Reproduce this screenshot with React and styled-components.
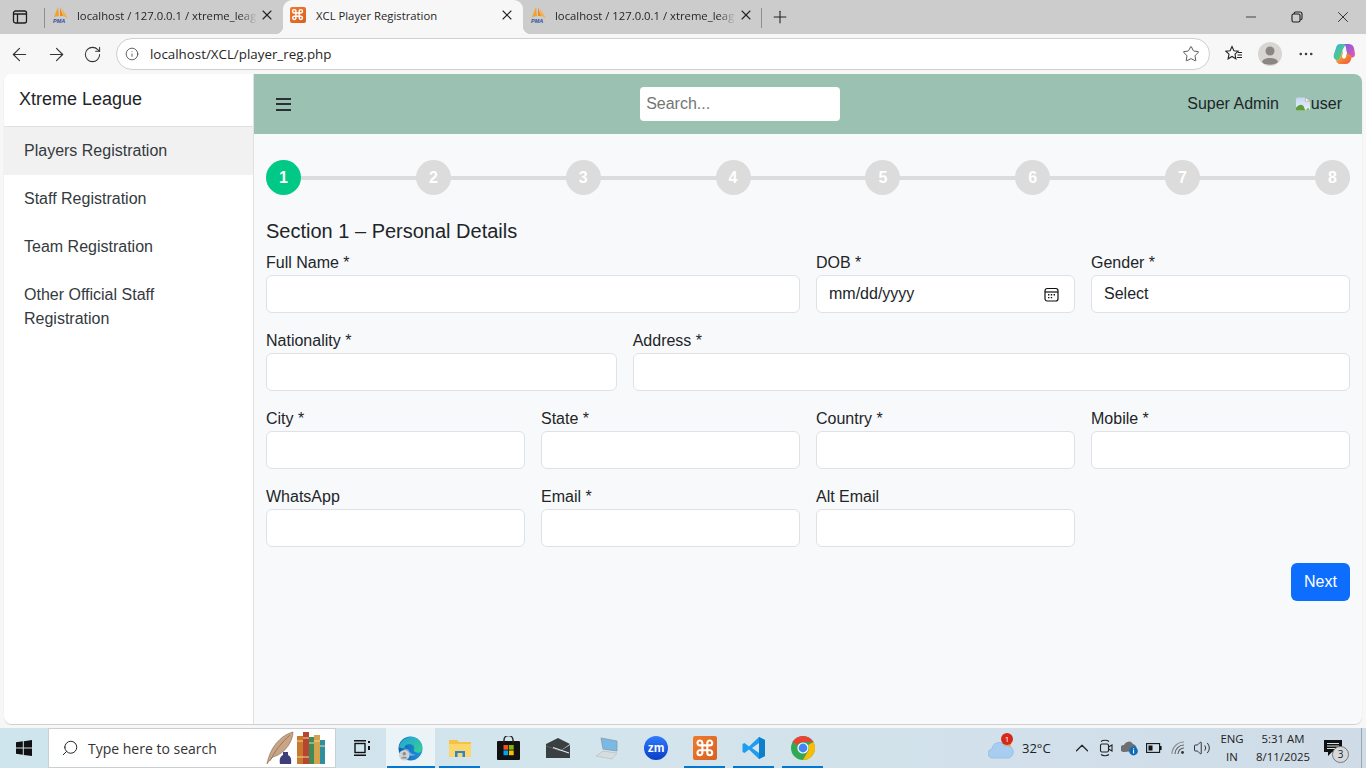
import React from "react";
import styled, { createGlobalStyle } from "styled-components";
import {
  ArrowLeft,
  ArrowRight,
  RotateCw,
  Info,
  Star,
  MoreHorizontal,
  X,
  Plus,
  Minus,
  Search,
  ChevronUp,
  Volume2,
  Command,
} from "lucide-react";

const GlobalStyle = createGlobalStyle`
  * { box-sizing: border-box; }
  html, body { margin: 0; padding: 0; height: 100%; overflow: hidden; }
  body { font-family: "Liberation Sans", Arial, sans-serif; background: #f7f7f7; color: #212529; }
`;

const Screen = styled.div`
  width: 1366px;
  height: 768px;
  display: flex;
  flex-direction: column;
  overflow: hidden;
`;

/* browser chrome */
const TabStrip = styled.div`
  height: 34px;
  background: #cccccc;
  display: flex;
  align-items: flex-end;
`;
const SideToggle = styled.div`
  width: 44px;
  height: 34px;
  display: flex;
  align-items: center;
  padding-left: 12px;
`;
const Sep = styled.div`
  width: 1px;
  height: 20px;
  background: #8f8f8f;
  margin: 0 0 6px 0;
`;
const Tab = styled.div`
  position: relative;
  width: ${(p) => p.$w}px;
  height: 34px;
  display: flex;
  align-items: center;
  padding: 0 ${(p) => p.$pr}px 4px 7px;
  background: ${(p) => (p.$active ? "#f7f7f7" : "transparent")};
  border-radius: 9px 9px 0 0;
  font-family: "Open Sans", sans-serif;
  font-size: 11.3px;
  color: #262626;
  ${(p) =>
    p.$active &&
    `
    &::before, &::after {
      content: "";
      position: absolute;
      bottom: 0;
      width: 8px;
      height: 8px;
    }
    &::before { left: -8px; background: radial-gradient(circle at 0 0, transparent 8px, #f7f7f7 8.5px); }
    &::after { right: -8px; background: radial-gradient(circle at 100% 0, transparent 8px, #f7f7f7 8.5px); }
  `}
`;
const TabTitle = styled.span`
  flex: 1;
  min-width: 0;
  margin: 0 2px 0 ${(p) => (p.$active ? 10 : 9)}px;
  white-space: nowrap;
  ${(p) =>
    !p.$active &&
    `
    -webkit-mask-image: linear-gradient(90deg, #000 90%, transparent 100%);
    mask-image: linear-gradient(90deg, #000 90%, transparent 100%);
  `}
`;
const NewTab = styled.div`
  width: 36px;
  display: flex;
  justify-content: center;
  height: 34px;
  align-items: center;
`;
const Grow = styled.div`
  flex: 1;
`;
const WinBtn = styled.div`
  width: 46px;
  height: 34px;
  display: flex;
  align-items: center;
  justify-content: center;
`;
const ToolBar = styled.div`
  height: 40px;
  background: #f7f7f7;
  display: flex;
  align-items: center;
`;
const NavBtn = styled.div`
  width: 36px;
  height: 32px;
  display: flex;
  align-items: center;
  justify-content: center;
  color: #333;
  margin-left: ${(p) => p.$ml || 0}px;
`;
const Omni = styled.div`
  width: 1094px;
  height: 32px;
  margin-left: 6px;
  background: #fff;
  border: 1px solid #cfcfcf;
  border-radius: 16px;
  display: flex;
  align-items: center;
  padding: 0 9px 0 8px;
  font-family: "Open Sans", sans-serif;
  font-size: 13.35px;
  color: #262626;
`;
const OmniText = styled.span`
  flex: 1;
  margin-left: 11px;
`;
const Avatar = styled.div`
  width: 24px;
  height: 24px;
  border-radius: 50%;
  background: #d8d6d3;
  display: flex;
  align-items: center;
  justify-content: center;
`;

/* page */
const Page = styled.div`
  height: 651px;
  padding: 0 4px 1px;
  background: #f7f7f7;
`;
const Frame = styled.div`
  height: 100%;
  display: flex;
  border-radius: 8px;
  overflow: hidden;
  background: #fff;
  box-shadow: 0 1px 1px rgba(0, 0, 0, 0.18);
`;
const Sidebar = styled.aside`
  width: 250px;
  flex: none;
  background: #fff;
  border-right: 1px solid #dee2e6;
`;
const Brand = styled.div`
  height: 53px;
  padding: 0 15px 1px;
  display: flex;
  align-items: center;
  font-size: 18px;
  color: #212529;
  border-bottom: 1px solid #dee2e6;
`;
const NavItem = styled.div`
  padding: 12px 20px;
  font-size: 16px;
  line-height: 24px;
  color: #343a40;
  background: ${(p) => (p.$active ? "#f1f1f1" : "transparent")};
`;
const Main = styled.main`
  flex: 1;
  min-width: 0;
  background: #f8f9fa;
  display: flex;
  flex-direction: column;
`;
const TopBar = styled.header`
  height: 60px;
  background: #9ac1b1;
  display: flex;
  align-items: center;
  justify-content: space-between;
  padding: 0 20px;
`;
const Burger = styled.div`
  width: 20px;
  height: 13px;
  padding: 0 0 0 2px;
  display: flex;
  flex-direction: column;
  justify-content: space-between;
`;
const BurgerBar = styled.span`
  display: block;
  width: 15px;
  height: 2px;
  background: #2b3034;
`;
const SearchBox = styled.div`
  width: 200px;
  height: 34px;
  background: #fff;
  border-radius: 4px;
  padding: 0 6px;
  display: flex;
  align-items: center;
  font-size: 16px;
  color: #757575;
  margin-right: 1px;
`;
const UserBox = styled.div`
  display: flex;
  align-items: center;
  font-size: 16px;
  color: #212529;
`;
const Broken = styled.div`
  display: flex;
  align-items: center;
  margin-left: 16px;
`;
const Content = styled.div`
  padding: 26px 12px 0;
`;
const Stepper = styled.div`
  display: flex;
  align-items: center;
  justify-content: space-between;
  position: relative;
  margin-bottom: 24px;
`;
const StepLine = styled.div`
  position: absolute;
  left: 0;
  right: 0;
  top: 16px;
  height: 4px;
  background: #dcdcdc;
`;
const Step = styled.div`
  position: relative;
  width: 35px;
  height: 35px;
  border-radius: 50%;
  background: ${(p) => (p.$active ? "#00c985" : "#dcdcdc")};
  color: #fff;
  font-weight: 700;
  font-size: 16px;
  display: flex;
  align-items: center;
  justify-content: center;
`;
const Title = styled.h5`
  margin: 0 0 8px;
  font-size: 20px;
  font-weight: 400;
  line-height: 24px;
  color: #212529;
`;
const FormGrid = styled.div`
  display: grid;
  grid-template-columns: repeat(12, 1fr);
  column-gap: 16px;
  row-gap: 16px;
`;
const Field = styled.div`
  grid-column: span ${(p) => p.$span};
`;
const Label = styled.label`
  display: block;
  font-size: 16px;
  line-height: 24px;
  color: #212529;
`;
const Control = styled.div`
  height: 38px;
  background: #fff;
  border: 1px solid #dee2e6;
  border-radius: 6px;
  padding: 0 15px 0 12px;
  display: flex;
  align-items: center;
  justify-content: space-between;
  font-size: 16px;
  color: #212529;
`;
const Actions = styled.div`
  display: flex;
  justify-content: flex-end;
  margin-top: 16px;
`;
const NextBtn = styled.button`
  height: 38px;
  width: 59px;
  background: #0d6efd;
  border: 0;
  border-radius: 6px;
  color: #fff;
  font-family: inherit;
  font-size: 16px;
`;

/* taskbar */
const Gap = styled.div`
  height: 3px;
  background: #f7f7f7;
`;
const Taskbar = styled.div`
  height: 40px;
  background: linear-gradient(90deg, #cfe5ee 0%, #d3e4ec 50%, #cfdce8 100%);
  display: flex;
  align-items: center;
`;
const StartBtn = styled.div`
  width: 48px;
  display: flex;
  justify-content: center;
`;
const SearchBar = styled.div`
  width: 288px;
  height: 40px;
  background: #fff;
  border: 1px solid #c9d0d4;
  display: flex;
  align-items: center;
  padding: 0 9px 0 12px;
  font-size: 14px;
  color: #333;
  margin-right: 1px;
`;
const SearchLabel = styled.span`
  margin-left: 9px;
  flex: 1;
  font-family: "Open Sans", sans-serif;
  font-size: 14px;
`;
const Slot = styled.div`
  position: relative;
  width: 49px;
  height: 40px;
  display: flex;
  align-items: center;
  justify-content: center;
  background: ${(p) => (p.$sel ? "rgba(255,255,255,.55)" : "transparent")};
  ${(p) =>
    p.$on &&
    `
    &::after {
      content: "";
      position: absolute;
      bottom: 0;
      left: ${p.$sel ? 1 : 4}px;
      right: ${p.$sel ? 0 : 4}px;
      height: 2px;
      background: #0078d4;
    }
  `}
`;
const Tray = styled.div`
  margin-left: auto;
  display: flex;
  align-items: center;
  height: 40px;
  padding-right: 8px;
  font-size: 13px;
  color: #222;
  font-family: "Open Sans", sans-serif;
`;
const Temp = styled.span`
  width: 28px;
  margin: 0 20px 0 8px;
  font-size: 13px;
  white-space: nowrap;
`;
const TrayIcon = styled.div`
  width: 24px;
  display: flex;
  justify-content: center;
`;
const Locale = styled.div`
  width: 34px;
  margin-left: 1px;
  text-align: center;
  font-size: 11.4px;
  line-height: 18px;
`;
const Clock = styled.div`
  width: 68px;
  text-align: center;
  font-size: 11.4px;
  line-height: 18px;
`;
const Weather = styled.div`
  position: relative;
  width: 26px;
  height: 24px;
  padding-top: 3px;
`;
const Badge = styled.span`
  position: absolute;
  top: -3px;
  left: 13px;
  width: 12px;
  height: 12px;
  border-radius: 50%;
  background: #d8281e;
  color: #fff;
  font-size: 8px;
  line-height: 12px;
  text-align: center;
`;
const Notify = styled.div`
  position: relative;
  width: 36px;
  height: 40px;
  padding-left: 7px;
  display: flex;
  align-items: center;
`;
const NotifyCount = styled.span`
  position: absolute;
  left: 15px;
  top: 18px;
  width: 17px;
  height: 17px;
  border-radius: 50%;
  background: #d5d9dc;
  border: 1px solid #777;
  font-size: 10px;
  line-height: 15px;
  text-align: center;
`;
const DesktopEdge = styled.div`
  width: 1px;
  height: 40px;
  background: #9aa5ad;
  margin-right: 4px;
`;
const XamppBox = styled.div`
  width: ${(p) => p.$size}px;
  height: ${(p) => p.$size}px;
  background: linear-gradient(135deg, #ee7b2e, #d9601f);
  border-radius: 2px;
  display: flex;
  align-items: center;
  justify-content: center;
  flex: none;
`;

const PmaIcon = () => (
  <svg width="16" height="16" viewBox="0 0 16 16" style={{ flex: "none" }}>
    <path d="M6 0 L2 10 L7 9 Z" fill="#f4a12a" />
    <path d="M8 0 L8 9 L11 9 Z" fill="#f08a1d" />
    <path d="M10 2 L16 11 L11 9 Z" fill="#f5b04a" />
    <text x="1" y="15.5" fontSize="5.5" fontWeight="700" fontStyle="italic" fill="#2f4f9f" fontFamily="Liberation Sans">PMA</text>
  </svg>
);

const XamppIcon = ({ size = 16 }) => (
  <XamppBox $size={size}>
    <Command size={size * 0.82} color="#fff" strokeWidth={2.6} />
  </XamppBox>
);

const SidePanelIcon = () => (
  <svg width="16" height="16" viewBox="0 0 16 16" fill="none" stroke="#1c1c1c" strokeWidth="1.3">
    <rect x="1.5" y="2" width="13" height="12" rx="2" />
    <path d="M1.5 5 H14.5 M5.5 5 V14" />
  </svg>
);

const RestoreIcon = () => (
  <svg width="12" height="12" viewBox="0 0 12 12" fill="none" stroke="#1c1c1c" strokeWidth="1.1">
    <rect x="1" y="3" width="8" height="8" rx="1.5" />
    <path d="M3.2 3 V2.5 A1.5 1.5 0 0 1 4.7 1 H9 A2 2 0 0 1 11 3 V7.3 A1.5 1.5 0 0 1 9.5 8.8" />
  </svg>
);

const FavsIcon = () => (
  <svg width="18" height="18" viewBox="0 0 18 18" fill="none" stroke="#222" strokeWidth="1.1">
    <path d="M7 1.5 L8.9 5.7 L13.2 6.2 L10 9.2 L10.9 13.8 L7 11.5 L3.1 13.8 L4 9.2 L0.8 6.2 L5.1 5.7 Z" />
    <path d="M13 7.5 H17 M12.5 10 H17 M12 12.5 H17" />
  </svg>
);

const CopilotIcon = () => (
  <svg width="22" height="22" viewBox="0 0 22 22">
    <defs>
      <linearGradient id="cpA" x1="0" y1="0" x2="1" y2="1">
        <stop offset="0" stopColor="#2fb5e8" />
        <stop offset="1" stopColor="#6ed04a" />
      </linearGradient>
      <linearGradient id="cpB" x1="0" y1="0" x2="1" y2="1">
        <stop offset="0" stopColor="#7d5cf0" />
        <stop offset="1" stopColor="#e85aa8" />
      </linearGradient>
      <linearGradient id="cpC" x1="0" y1="0" x2="1" y2="1">
        <stop offset="0" stopColor="#f5c030" />
        <stop offset="1" stopColor="#f0503c" />
      </linearGradient>
    </defs>
    <path d="M7 1 H13 L10 6 L8 13 C7 17 5 18 3 17 C1 16 0 14 1 11 L3 5 C3.5 2.5 5 1 7 1 Z" fill="url(#cpA)" />
    <path d="M11 1 H16 C18 1 20 2 21 5 L22 11 C22 14 20 15 18 14 L14 11 L13 5 C12.7 3 12 1.5 11 1 Z" fill="url(#cpB)" />
    <path d="M9 9 L11 9 L19 13 C18 18 16 21 13 21 H7 C5 21 3 19 3 17 C6 18 7 16 8 13 Z" fill="url(#cpC)" />
    <path d="M10 9 H14 L13 14 C12 16 10 16 9 14 Z" fill="#fff" />
  </svg>
);

const BrokenImg = () => (
  <svg width="16" height="16" viewBox="0 0 17 16">
    <defs>
      <linearGradient id="skyA" x1="0" y1="0" x2="0" y2="1">
        <stop offset="0" stopColor="#c6d8f2" />
        <stop offset="1" stopColor="#e8f0fa" />
      </linearGradient>
    </defs>
    <path d="M1 3 Q1 1 3 1 H11 L16 5 V15 H1 Z" fill="url(#skyA)" />
    <path d="M1 15 V12 C4 8 7 8 9 10 L11 15 Z" fill="#5f9e3a" />
    <path d="M11 15 L14 12 L16 15 Z" fill="#7fb45a" />
    <path d="M11 1 V5 H16 Z" fill="#fff" stroke="#a8a8a8" strokeWidth=".8" />
  </svg>
);

const CalendarIcon = () => (
  <svg width="15" height="15" viewBox="0 0 15 15" fill="none" stroke="#111" strokeWidth="1.2">
    <rect x="1" y="1.5" width="13" height="12.5" rx="2.2" />
    <path d="M1 5 H14" />
    <path d="M4 7.7 H5.4 M6.8 7.7 H8.2 M9.6 7.7 H11 M4 10.6 H5.4 M6.8 10.6 H8.2" strokeWidth="1.4" />
  </svg>
);

const WinLogo = () => (
  <svg width="16" height="16" viewBox="0 0 16 16" fill="#111">
    <path d="M0 2.3 L6.8 1.3 V7.6 H0 Z M7.8 1.2 L16 0 V7.6 H7.8 Z M0 8.5 H6.8 V14.8 L0 13.8 Z M7.8 8.5 H16 V16 L7.8 14.9 Z" />
  </svg>
);

const Quill = () => (
  <svg width="60" height="34" viewBox="0 0 60 34">
    <path d="M1 33 C3 22 10 6 27 1 C27 10 19 23 7 26 L3 30 Z" fill="#c8a587" stroke="#8c6a50" strokeWidth=".6" />
    <path d="M4 30 C9 20 15 12 24 4" fill="none" stroke="#7d5a40" strokeWidth=".6" />
    <path d="M14 33 C13 27 15 25 17 24 V21 H22 V24 C24 25 26 27 25 33 Z" fill="#3e3f78" />
    <rect x="31" y="5" width="6" height="28" fill="#c9792e" />
    <rect x="37" y="1" width="6" height="32" fill="#b8452f" />
    <rect x="43" y="6" width="5" height="27" fill="#3f8a5a" />
    <rect x="48" y="4" width="6" height="29" fill="#d6a24a" />
    <rect x="54" y="9" width="5" height="24" fill="#2e8fa0" />
    <path d="M31 10 H37 M31 26 H37 M37 7 H43 M37 26 H43 M43 12 H48 M48 10 H54 M54 15 H59" stroke="#f0d9a0" strokeWidth="1" />
  </svg>
);

const TaskView = () => (
  <svg width="18" height="18" viewBox="0 0 18 18" fill="none" stroke="#111" strokeWidth="1.4">
    <rect x="2" y="4.5" width="10" height="9" />
    <path d="M1 1.7 H13 M1 16.3 H13" />
    <rect x="15" y="2" width="2" height="2" fill="#111" strokeWidth="0" />
    <rect x="15" y="7" width="2" height="4" fill="#111" strokeWidth="0" />
  </svg>
);

const EdgeIcon = () => (
  <svg width="25" height="25" viewBox="0 0 24 24">
    <defs>
      <linearGradient id="edgeA" x1="0" y1="0" x2="1" y2="1">
        <stop offset="0" stopColor="#1fa3e0" />
        <stop offset="1" stopColor="#36d38a" />
      </linearGradient>
      <linearGradient id="edgeB" x1="0" y1="0" x2="1" y2="0">
        <stop offset="0" stopColor="#0f5fb0" />
        <stop offset="1" stopColor="#2095e0" />
      </linearGradient>
    </defs>
    <circle cx="12" cy="12" r="11.5" fill="url(#edgeB)" />
    <path d="M1 11 C2 3 12 -2 19 3 C24 7 24 13 22 15 C20 17 16 16 15 14 C17 10 14 7 10 8 C7 8.5 6 10 6 12 Z" fill="url(#edgeA)" />
    <path d="M6 12 C6 17 11 21 17 18 C14 18 11 16 10 13 Z" fill="#e4f2f8" opacity=".45" />
    <circle cx="6" cy="18.5" r="5" fill="#cfd2d4" />
    <circle cx="6" cy="17" r="1.7" fill="#8d8d8d" />
    <path d="M3 21.5 C3.5 19.3 8.5 19.3 9 21.5 Z" fill="#8d8d8d" />
  </svg>
);

const FolderIcon = () => (
  <svg width="24" height="22" viewBox="0 0 24 22">
    <path d="M1 3 H9 L11 5 H23 V20 H1 Z" fill="#f5c242" />
    <rect x="1" y="7" width="22" height="13" fill="#fbd76b" />
    <path d="M7 14 H17 V20 H14.5 V16 H9.5 V20 H7 Z" fill="#2b86d0" />
  </svg>
);

const StoreIcon = () => (
  <svg width="23" height="24" viewBox="0 0 23 24">
    <rect x="0" y="5" width="23" height="19" rx="1" fill="#111" />
    <path d="M7 7 V4 A4.5 4.5 0 0 1 16 4 V7" fill="none" stroke="#222" strokeWidth="1.4" />
    <rect x="6.5" y="9" width="4.7" height="4.7" fill="#f25022" />
    <rect x="12" y="9" width="4.7" height="4.7" fill="#7fba00" />
    <rect x="6.5" y="14.5" width="4.7" height="4.7" fill="#00a4ef" />
    <rect x="12" y="14.5" width="4.7" height="4.7" fill="#ffb900" />
  </svg>
);

const MailIcon = () => (
  <svg width="24" height="20" viewBox="0 0 24 20">
    <path d="M0 6 L12 0 L24 6 L14 13 L0 8 Z" fill="#3a3f42" />
    <path d="M0 8 L14 13 L24 7 V20 H0 Z" fill="#3a3f42" />
    <path d="M7 9.5 L23 15" stroke="#e2edf2" strokeWidth="1.2" />
  </svg>
);

const LaptopIcon = () => (
  <svg width="24" height="24" viewBox="0 0 24 24">
    <path d="M6 2 L22 5 V15 L8 13 Z" fill="#79b9e6" stroke="#8a9aa5" strokeWidth=".8" />
    <path d="M1 20 L8 15 L22 17 L17 23 Z" fill="#d7dcdf" stroke="#aab2b7" strokeWidth=".5" />
  </svg>
);

const ZoomIcon = () => (
  <svg width="24" height="24" viewBox="0 0 24 24">
    <defs>
      <linearGradient id="zmA" x1="0" y1="0" x2="0" y2="1">
        <stop offset="0" stopColor="#2f7bff" />
        <stop offset="1" stopColor="#0a3fc4" />
      </linearGradient>
    </defs>
    <circle cx="12" cy="12" r="12" fill="url(#zmA)" />
    <text x="12" y="16" textAnchor="middle" fontSize="12" fontWeight="700" fill="#fff" fontFamily="Liberation Sans">zm</text>
  </svg>
);

const VsCodeIcon = () => (
  <svg width="24" height="24" viewBox="0 0 24 24">
    <path d="M17 1 L23 4 V20 L17 23 L7 13.5 L2.5 17 L0.5 16 V8 L2.5 7 L7 10.5 Z" fill="#1f9cf0" />
    <path d="M17 1 L23 4 V20 L17 23 Z" fill="#0d7fcb" />
    <path d="M17 7 L17 17 L10 12 Z" fill="#d3e4ec" />
  </svg>
);

const ChromeIcon = () => (
  <svg width="24" height="24" viewBox="0 0 24 24">
    <circle cx="12" cy="12" r="12" fill="#34a853" />
    <path d="M12 0 A12 12 0 0 1 22.4 6 H12 A6 6 0 0 0 6.8 9 L1.6 6 A12 12 0 0 1 12 0 Z" fill="#ea4335" />
    <path d="M22.4 6 A12 12 0 0 1 12 24 L17.2 15 A6 6 0 0 0 17.2 9 Z" fill="#fbbc05" />
    <circle cx="12" cy="12" r="5.6" fill="#fff" />
    <circle cx="12" cy="12" r="4.4" fill="#4285f4" />
  </svg>
);

const CloudIcon = () => (
  <svg width="26" height="20" viewBox="0 0 26 20">
    <circle cx="18" cy="6" r="5" fill="#f5a623" />
    <path d="M5 19 A4.5 4.5 0 0 1 4 10 A7 7 0 0 1 17 7 A6 6 0 0 1 21 19 Z" fill="#a9cdf0" stroke="#86b2de" strokeWidth=".6" />
  </svg>
);

const CameraIcon = () => (
  <svg width="14" height="18" viewBox="0 0 14 18" fill="none" stroke="#222" strokeWidth="1.1">
    <rect x="1.5" y="5" width="8" height="8" rx="1.5" />
    <path d="M9.5 8 L13 6 V12 L9.5 10 M2 2.5 C4 .8 8 .8 10 2.5 M2 15.5 C4 17.2 8 17.2 10 15.5" />
  </svg>
);

const CloudInfo = () => (
  <svg width="18" height="16" viewBox="0 0 18 16">
    <path d="M3 12 A3 3 0 0 1 3 5 A5 5 0 0 1 12 4 A4 4 0 0 1 14 11 Z" fill="#6d6f72" />
    <circle cx="12.5" cy="11" r="4.4" fill="#0f6cbd" />
    <rect x="12" y="10" width="1.1" height="3.4" fill="#fff" />
    <rect x="12" y="8.3" width="1.1" height="1.1" fill="#fff" />
  </svg>
);

const BatteryIcon = () => (
  <svg width="16" height="10" viewBox="0 0 16 10" fill="none" stroke="#111" strokeWidth="1.1">
    <rect x=".6" y=".6" width="13" height="8.8" />
    <rect x="2.5" y="2.5" width="4" height="5" fill="#111" strokeWidth="0" />
    <rect x="14" y="3" width="1.6" height="4" fill="#111" strokeWidth="0" />
  </svg>
);

const WifiCorner = () => (
  <svg width="14" height="14" viewBox="0 0 14 14" fill="none" stroke="#666" strokeWidth="1.2">
    <path d="M1 13 A12 12 0 0 1 13 1" opacity=".65" />
    <path d="M4 13 A9 9 0 0 1 13 4" />
    <path d="M7 13 A6 6 0 0 1 13 7" />
    <circle cx="11.5" cy="11.5" r="1.4" fill="#333" stroke="none" />
  </svg>
);

const NotifyIcon = () => (
  <svg width="18" height="16" viewBox="0 0 18 16">
    <path d="M0 0 H18 V12 H8 L4 16 V12 H0 Z" fill="#111" />
    <path d="M3 3.5 H15 M3 6 H15 M3 8.5 H15" stroke="#d3e0e8" strokeWidth="1" />
  </svg>
);

const labelRows = [
  [["Full Name *", 6], ["DOB *", 3, "date"], ["Gender *", 3, "select"]],
  [["Nationality *", 4], ["Address *", 8]],
  [["City *", 3], ["State *", 3], ["Country *", 3], ["Mobile *", 3]],
  [["WhatsApp", 3], ["Email *", 3], ["Alt Email", 3]],
];

function App() {
  const fields = labelRows.flat();
  return (
    <Screen>
      <GlobalStyle />
      <TabStrip>
        <SideToggle>
          <SidePanelIcon />
        </SideToggle>
        <Sep />
        <Tab $w={238} $pr={8}>
          <PmaIcon />
          <TabTitle>localhost / 127.0.0.1 / xtreme_leag</TabTitle>
          <X size={16} color="#222" strokeWidth={1.6} />
        </Tab>
        <Tab $w={240} $pr={8} $active>
          <XamppIcon />
          <TabTitle $active>XCL Player Registration</TabTitle>
          <X size={16} color="#222" strokeWidth={1.6} />
        </Tab>
        <Tab $w={238} $pr={7}>
          <PmaIcon />
          <TabTitle>localhost / 127.0.0.1 / xtreme_leag</TabTitle>
          <X size={16} color="#222" strokeWidth={1.6} />
        </Tab>
        <Sep />
        <NewTab>
          <Plus size={20} color="#222" strokeWidth={1.3} />
        </NewTab>
        <Grow />
        <WinBtn>
          <Minus size={16} color="#222" strokeWidth={1.2} />
        </WinBtn>
        <WinBtn>
          <RestoreIcon />
        </WinBtn>
        <WinBtn>
          <X size={18} color="#222" strokeWidth={1.2} />
        </WinBtn>
      </TabStrip>
      <ToolBar>
        <NavBtn $ml={1}>
          <ArrowLeft size={21} strokeWidth={1.3} />
        </NavBtn>
        <NavBtn $ml={1}>
          <ArrowRight size={21} strokeWidth={1.3} />
        </NavBtn>
        <NavBtn>
          <RotateCw size={19} strokeWidth={1.3} />
        </NavBtn>
        <Omni>
          <Info size={14} color="#333" strokeWidth={1.3} />
          <OmniText>localhost/XCL/player_reg.php</OmniText>
          <Star size={18} color="#444" strokeWidth={1.2} />
        </Omni>
        <NavBtn $ml={6}>
          <FavsIcon />
        </NavBtn>
        <NavBtn>
          <Avatar>
            <svg width="24" height="24" viewBox="0 0 24 24" fill="#8a8782">
              <circle cx="12" cy="9" r="4.5" />
              <path d="M4 20 C5 14.5 19 14.5 20 20 C17 23.5 7 23.5 4 20 Z" />
            </svg>
          </Avatar>
        </NavBtn>
        <NavBtn>
          <MoreHorizontal size={18} strokeWidth={1.4} />
        </NavBtn>
        <NavBtn $ml={2}>
          <CopilotIcon />
        </NavBtn>
      </ToolBar>
      <Page>
        <Frame>
          <Sidebar>
            <Brand>Xtreme League</Brand>
            <NavItem $active>Players Registration</NavItem>
            <NavItem>Staff Registration</NavItem>
            <NavItem>Team Registration</NavItem>
            <NavItem>Other Official Staff Registration</NavItem>
          </Sidebar>
          <Main>
            <TopBar>
              <Burger>
                <BurgerBar />
                <BurgerBar />
                <BurgerBar />
              </Burger>
              <SearchBox>Search...</SearchBox>
              <UserBox>
                Super Admin
                <Broken>
                  <BrokenImg />
                  user
                </Broken>
              </UserBox>
            </TopBar>
            <Content>
              <Stepper>
                <StepLine />
                {[1, 2, 3, 4, 5, 6, 7, 8].map((n) => (
                  <Step key={n} $active={n === 1}>
                    {n}
                  </Step>
                ))}
              </Stepper>
              <Title>Section 1 – Personal Details</Title>
              <FormGrid>
                {fields.map(([label, span, kind]) => (
                  <Field key={label} $span={span}>
                    <Label>{label}</Label>
                    <Control>
                      {kind === "date" && (
                        <>
                          mm/dd/yyyy
                          <CalendarIcon />
                        </>
                      )}
                      {kind === "select" && "Select"}
                    </Control>
                  </Field>
                ))}
              </FormGrid>
              <Actions>
                <NextBtn>Next</NextBtn>
              </Actions>
            </Content>
          </Main>
        </Frame>
      </Page>
      <Gap />
      <Taskbar>
        <StartBtn>
          <WinLogo />
        </StartBtn>
        <SearchBar>
          <Search size={18} color="#222" strokeWidth={1.3} style={{ transform: "scaleX(-1)" }} />
          <SearchLabel>Type here to search</SearchLabel>
          <Quill />
        </SearchBar>
        <Slot>
          <TaskView />
        </Slot>
        <Slot $on $sel>
          <EdgeIcon />
        </Slot>
        <Slot $on>
          <FolderIcon />
        </Slot>
        <Slot>
          <StoreIcon />
        </Slot>
        <Slot>
          <MailIcon />
        </Slot>
        <Slot>
          <LaptopIcon />
        </Slot>
        <Slot>
          <ZoomIcon />
        </Slot>
        <Slot $on>
          <XamppIcon size={24} />
        </Slot>
        <Slot $on>
          <VsCodeIcon />
        </Slot>
        <Slot $on>
          <ChromeIcon />
        </Slot>
        <Tray>
          <Weather>
            <CloudIcon />
            <Badge>1</Badge>
          </Weather>
          <Temp>32°C</Temp>
          <TrayIcon>
            <ChevronUp size={22} strokeWidth={1.3} />
          </TrayIcon>
          <TrayIcon>
            <CameraIcon />
          </TrayIcon>
          <TrayIcon>
            <CloudInfo />
          </TrayIcon>
          <TrayIcon>
            <BatteryIcon />
          </TrayIcon>
          <TrayIcon>
            <WifiCorner />
          </TrayIcon>
          <TrayIcon>
            <Volume2 size={18} strokeWidth={1.2} />
          </TrayIcon>
          <Locale>
            ENG
            <br />
            IN
          </Locale>
          <Clock>
            5:31 AM
            <br />
            8/11/2025
          </Clock>
          <Notify>
            <NotifyIcon />
            <NotifyCount>3</NotifyCount>
          </Notify>
        </Tray>
        <DesktopEdge />
      </Taskbar>
    </Screen>
  );
}

export default App;
